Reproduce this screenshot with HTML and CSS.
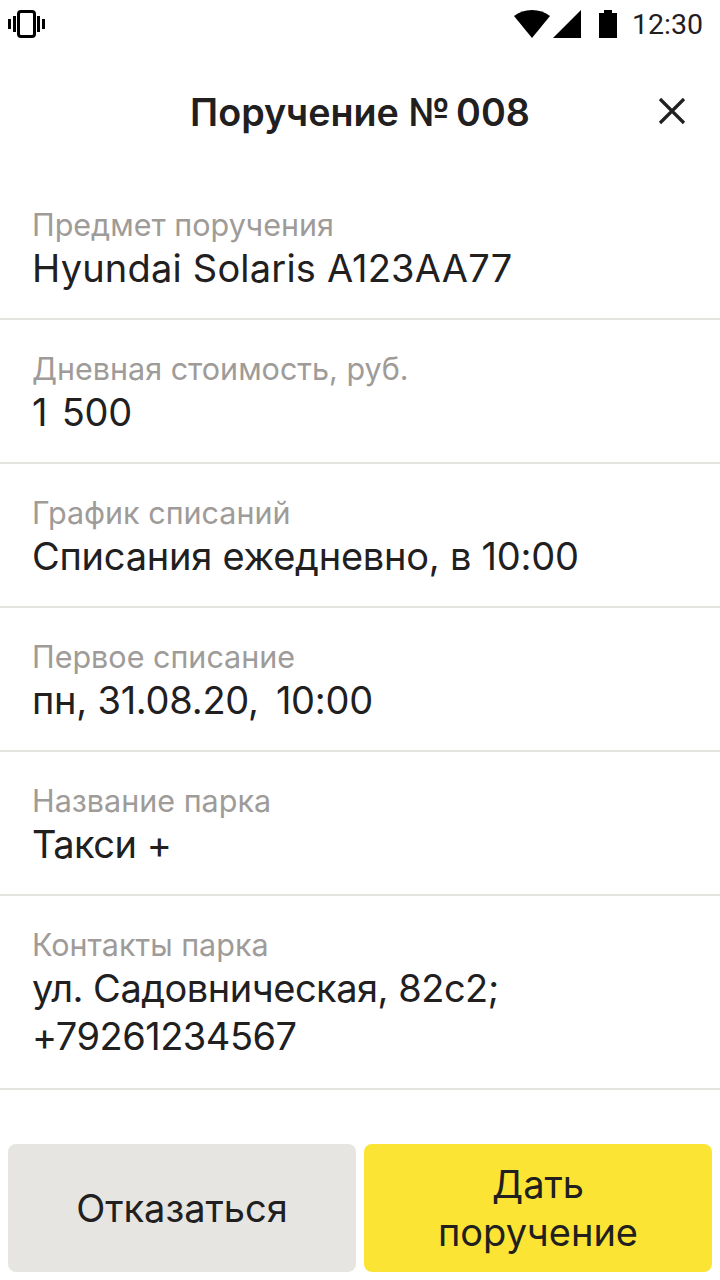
FILE: index.html
```html
<!DOCTYPE html>
<html lang="ru">

<head>
    <meta charset="UTF-8">
    <meta name="viewport" content="width=device-width, initial-scale=1.0">
    <title>Поручение № 008</title>
    <link rel="stylesheet" href="styles.css">
</head>

<body>
    <div class="status-bar">
        <svg width="37" height="28" viewBox="0 0 37 28">
            <path d="M0 9h3v10H0zM5 6h3v16H5zM29 6h3v16h-3zM34 9h3v10h-3z" fill="#000"/>
            <rect x="10.500" y="1.500" width="16" height="25" rx="2.500" fill="#fff" stroke="#000" stroke-width="3"/>
        </svg>
        <div class="status-right">
            <svg width="36" height="28" viewBox="0 0 36 28"><path d="M0 6C5 2 11 0 18 0s13 2 18 6L18 28z" fill="#000"/></svg>
            <svg class="icon-signal" width="28" height="28" viewBox="0 0 28 28"><path d="M0 28 28 0v28z" fill="#000"/></svg>
            <svg class="icon-battery" width="18" height="28" viewBox="0 0 18 28"><path d="M0 3h5V0h8v3h5v25H0z" fill="#000"/></svg>
            <span class="clock">12:30</span>
        </div>
    </div>

    <header class="title-bar">
        <h1>Поручение №&#8201;008</h1>
        <svg class="close" width="28" height="28" viewBox="0 0 28 28">
            <path d="M2 2l24 24M26 2 2 26" stroke="#21201f" stroke-width="3.200" fill="none"/>
        </svg>
    </header>

    <div class="details">
        <div class="row">
            <div class="label">Предмет поручения</div>
            <div class="value value-latin">Hyundai Solaris A123AA77</div>
        </div>
        <div class="row">
            <div class="label">Дневная стоимость, руб.</div>
            <div class="value value-spaced">1 500</div>
        </div>
        <div class="row">
            <div class="label">График списаний</div>
            <div class="value">Списания ежедневно, в 10:00</div>
        </div>
        <div class="row">
            <div class="label">Первое списание</div>
            <div class="value">пн, 31.08.20,&#8201; 10:00</div>
        </div>
        <div class="row">
            <div class="label">Название парка</div>
            <div class="value value-tight">Такси +</div>
        </div>
        <div class="row row-multi">
            <div class="label">Контакты парка</div>
            <div class="value value-tight">ул. Садовническая, 82с2;<br>+79261234567</div>
        </div>
    </div>

    <div class="actions">
        <button type="button" class="btn btn-grey">Отказаться</button>
        <button type="button" class="btn btn-yellow">Дать поручение</button>
    </div>
</body>

</html>
```

FILE: styles.css
```css
* {
    box-sizing: border-box;
}

html,
body {
    margin: 0;
    padding: 0;
}

body {
    width: 720px;
    height: 1280px;
    overflow: hidden;
    background: #fff;
    color: #21201f;
    font-family: Inter, "Open Sans", sans-serif;
}

.status-bar {
    height: 48px;
    display: flex;
    align-items: center;
    justify-content: space-between;
    padding: 0 17px 0 8px;
}

.status-right {
    display: flex;
    align-items: center;
}

.icon-signal {
    margin-left: 3px;
}

.icon-battery {
    margin: 0 15px 0 18px;
}

.clock {
    font-family: Roboto, sans-serif;
    font-size: 28.500px;
    color: #21201f;
}

.title-bar {
    position: relative;
    height: 128px;
    display: flex;
    align-items: center;
    justify-content: center;
}

.title-bar h1 {
    margin: 0;
    font-size: 37.700px;
    font-weight: 600;
    line-height: 44px;
}

.close {
    position: absolute;
    right: 34px;
    top: 49px;
}

.row {
    padding: 27px 32px 26px;
    border-bottom: 2px solid #e4e3df;
}

.row-multi {
    padding-bottom: 28px;
}

.label {
    font-size: 30.500px;
    line-height: 44px;
    margin-bottom: -3px;
    color: #9e9b98;
}

.value {
    font-size: 38px;
    line-height: 48px;
    letter-spacing: -0.250px;
}

.value-latin {
    letter-spacing: 0.200px;
}

.value-spaced {
    word-spacing: 4px;
}

.value-tight {
    letter-spacing: -0.500px;
}

.actions {
    display: flex;
    gap: 8px;
    padding: 0 8px;
    margin-top: 54px;
}

.btn {
    flex: 1;
    height: 128px;
    border: none;
    border-radius: 8px;
    padding: 0 40px;
    font-family: inherit;
    font-size: 38px;
    line-height: 48px;
    color: #21201f;
}

.btn-grey {
    background: #e6e5e1;
}

.btn-yellow {
    background: #fce434;
}
```
